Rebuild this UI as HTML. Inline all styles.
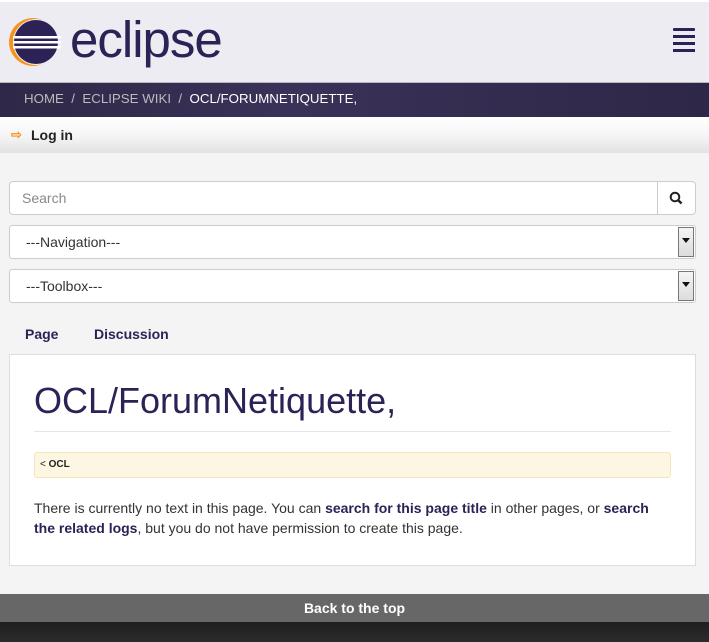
<!DOCTYPE html>
<html><head><meta charset="utf-8"><style>
*{box-sizing:border-box;margin:0;padding:0}
body{width:709px;height:642px;overflow:hidden;background:#f4f4f4;font-family:"Liberation Sans",sans-serif;position:relative}
.abs{position:absolute}
</style></head><body>
<div class="abs" style="left:0;top:0;width:709px;height:2px;background:#fff"></div>
<div class="abs" style="left:0;top:2px;width:709px;height:80px;background:#edecf2"></div>
<svg class="abs" style="left:8px;top:17px" width="56" height="50" viewBox="0 0 56 50">
<circle cx="25" cy="25" r="24" fill="#f7941e"/>
<circle cx="28" cy="25" r="23" fill="#edecf2"/>
<circle cx="28" cy="25" r="22" fill="#2c2255"/>
<rect x="5" y="19" width="48" height="2.5" fill="#fff"/>
<rect x="5" y="24" width="48" height="2.5" fill="#fff"/>
<rect x="5" y="29" width="48" height="2.5" fill="#fff"/>
</svg>
<div class="abs" style="left:70px;top:10px;font-size:51px;color:#2c2255;letter-spacing:-1px;line-height:60px">eclipse</div>
<div class="abs" style="left:673px;top:28px;width:22px;height:3px;background:#2c2255;border-radius:1px"></div>
<div class="abs" style="left:673px;top:35px;width:22px;height:3px;background:#2c2255"></div>
<div class="abs" style="left:673px;top:42px;width:22px;height:3px;background:#2c2255"></div>
<div class="abs" style="left:673px;top:49px;width:22px;height:3px;background:#2c2255"></div>
<div class="abs" style="left:0;top:82px;width:709px;height:1px;background:#b8b8c0"></div>
<div class="abs" style="left:0;top:83px;width:709px;height:34px;background:linear-gradient(90deg,#2f2848,#3a3258 40%,#2e2747)"></div>
<div class="abs" style="left:24px;top:91px;font-size:13.3px;color:#bbb;line-height:16px">HOME &nbsp;/&nbsp; ECLIPSE WIKI &nbsp;/&nbsp; <span style="color:#fff">OCL/FORUMNETIQUETTE,</span></div>
<div class="abs" style="left:0;top:117px;width:709px;height:36px;background:linear-gradient(#fff,#f6f6f6 50%,#e2e2e2)"></div>
<div class="abs" style="left:11px;top:127px;font-size:13px;color:#f7941e;font-weight:bold">&#8680;</div>
<div class="abs" style="left:31px;top:127px;font-size:14px;font-weight:bold;color:#222">Log in</div>
<div class="abs" style="left:9px;top:181px;width:687px;height:34px;background:#fff;border:1px solid #ccc;border-radius:4px"></div>
<div class="abs" style="left:657px;top:181px;width:1px;height:34px;background:#ccc"></div>
<div class="abs" style="left:22px;top:190px;font-size:14px;color:#888">Search</div>
<svg class="abs" style="left:669px;top:191px" width="14" height="14" viewBox="0 0 14 14"><circle cx="6" cy="6" r="4.3" fill="none" stroke="#222" stroke-width="2"/><path d="M9 9l3.5 3.5" stroke="#222" stroke-width="2.4"/></svg>
<div class="abs" style="left:9px;top:225px;width:687px;height:34px;background:#fff;border:1px solid #ccc;border-radius:3px"></div>
<div class="abs" style="left:26px;top:234px;font-size:14px;color:#333">---Navigation---</div>
<div class="abs" style="left:678px;top:227px;width:16px;height:30px;border:1px solid #777;background:linear-gradient(#f4f4f4,#ddd)"><div style="margin:10px auto 0;width:0;height:0;border-left:4px solid transparent;border-right:4px solid transparent;border-top:5px solid #111"></div></div>
<div class="abs" style="left:9px;top:269px;width:687px;height:34px;background:#fff;border:1px solid #ccc;border-radius:3px"></div>
<div class="abs" style="left:26px;top:278px;font-size:14px;color:#333">---Toolbox---</div>
<div class="abs" style="left:678px;top:271px;width:16px;height:30px;border:1px solid #777;background:linear-gradient(#f4f4f4,#ddd)"><div style="margin:10px auto 0;width:0;height:0;border-left:4px solid transparent;border-right:4px solid transparent;border-top:5px solid #111"></div></div>
<div class="abs" style="left:25px;top:326px;font-size:14px;font-weight:bold;color:#2c2255">Page</div>
<div class="abs" style="left:94px;top:326px;font-size:14px;font-weight:bold;color:#2c2255">Discussion</div>
<div class="abs" style="left:9px;top:354px;width:687px;height:212px;background:#fff;border:1px solid #ddd"></div>
<div class="abs" style="left:34px;top:380px;font-size:36px;color:#2c2255;line-height:42px">OCL/ForumNetiquette,</div>
<div class="abs" style="left:34px;top:431px;width:637px;height:1px;background:#e5e5e5"></div>
<div class="abs" style="left:34px;top:452px;width:637px;height:26px;background:#fcf6e2;border:1px solid #f5e6b8;border-radius:3px"></div>
<div class="abs" style="left:40px;top:459px;font-size:10px;color:#222">&lt; <b>OCL</b></div>
<div class="abs" style="left:34px;top:498px;width:640px;font-size:14px;line-height:20px;color:#333">There is currently no text in this page. You can <b style="color:#2c2255">search for this page title</b> in other pages, or <b style="color:#2c2255">search<br>the related logs</b>, but you do not have permission to create this page.</div>
<div class="abs" style="left:0;top:594px;width:709px;height:28px;background:#676767;color:#fff;font-size:14px;font-weight:bold;text-align:center;line-height:29px">Back to the top</div>
<div class="abs" style="left:0;top:622px;width:709px;height:20px;background:linear-gradient(#1e1e1e,#2c2c2c)"></div>
</body></html>
